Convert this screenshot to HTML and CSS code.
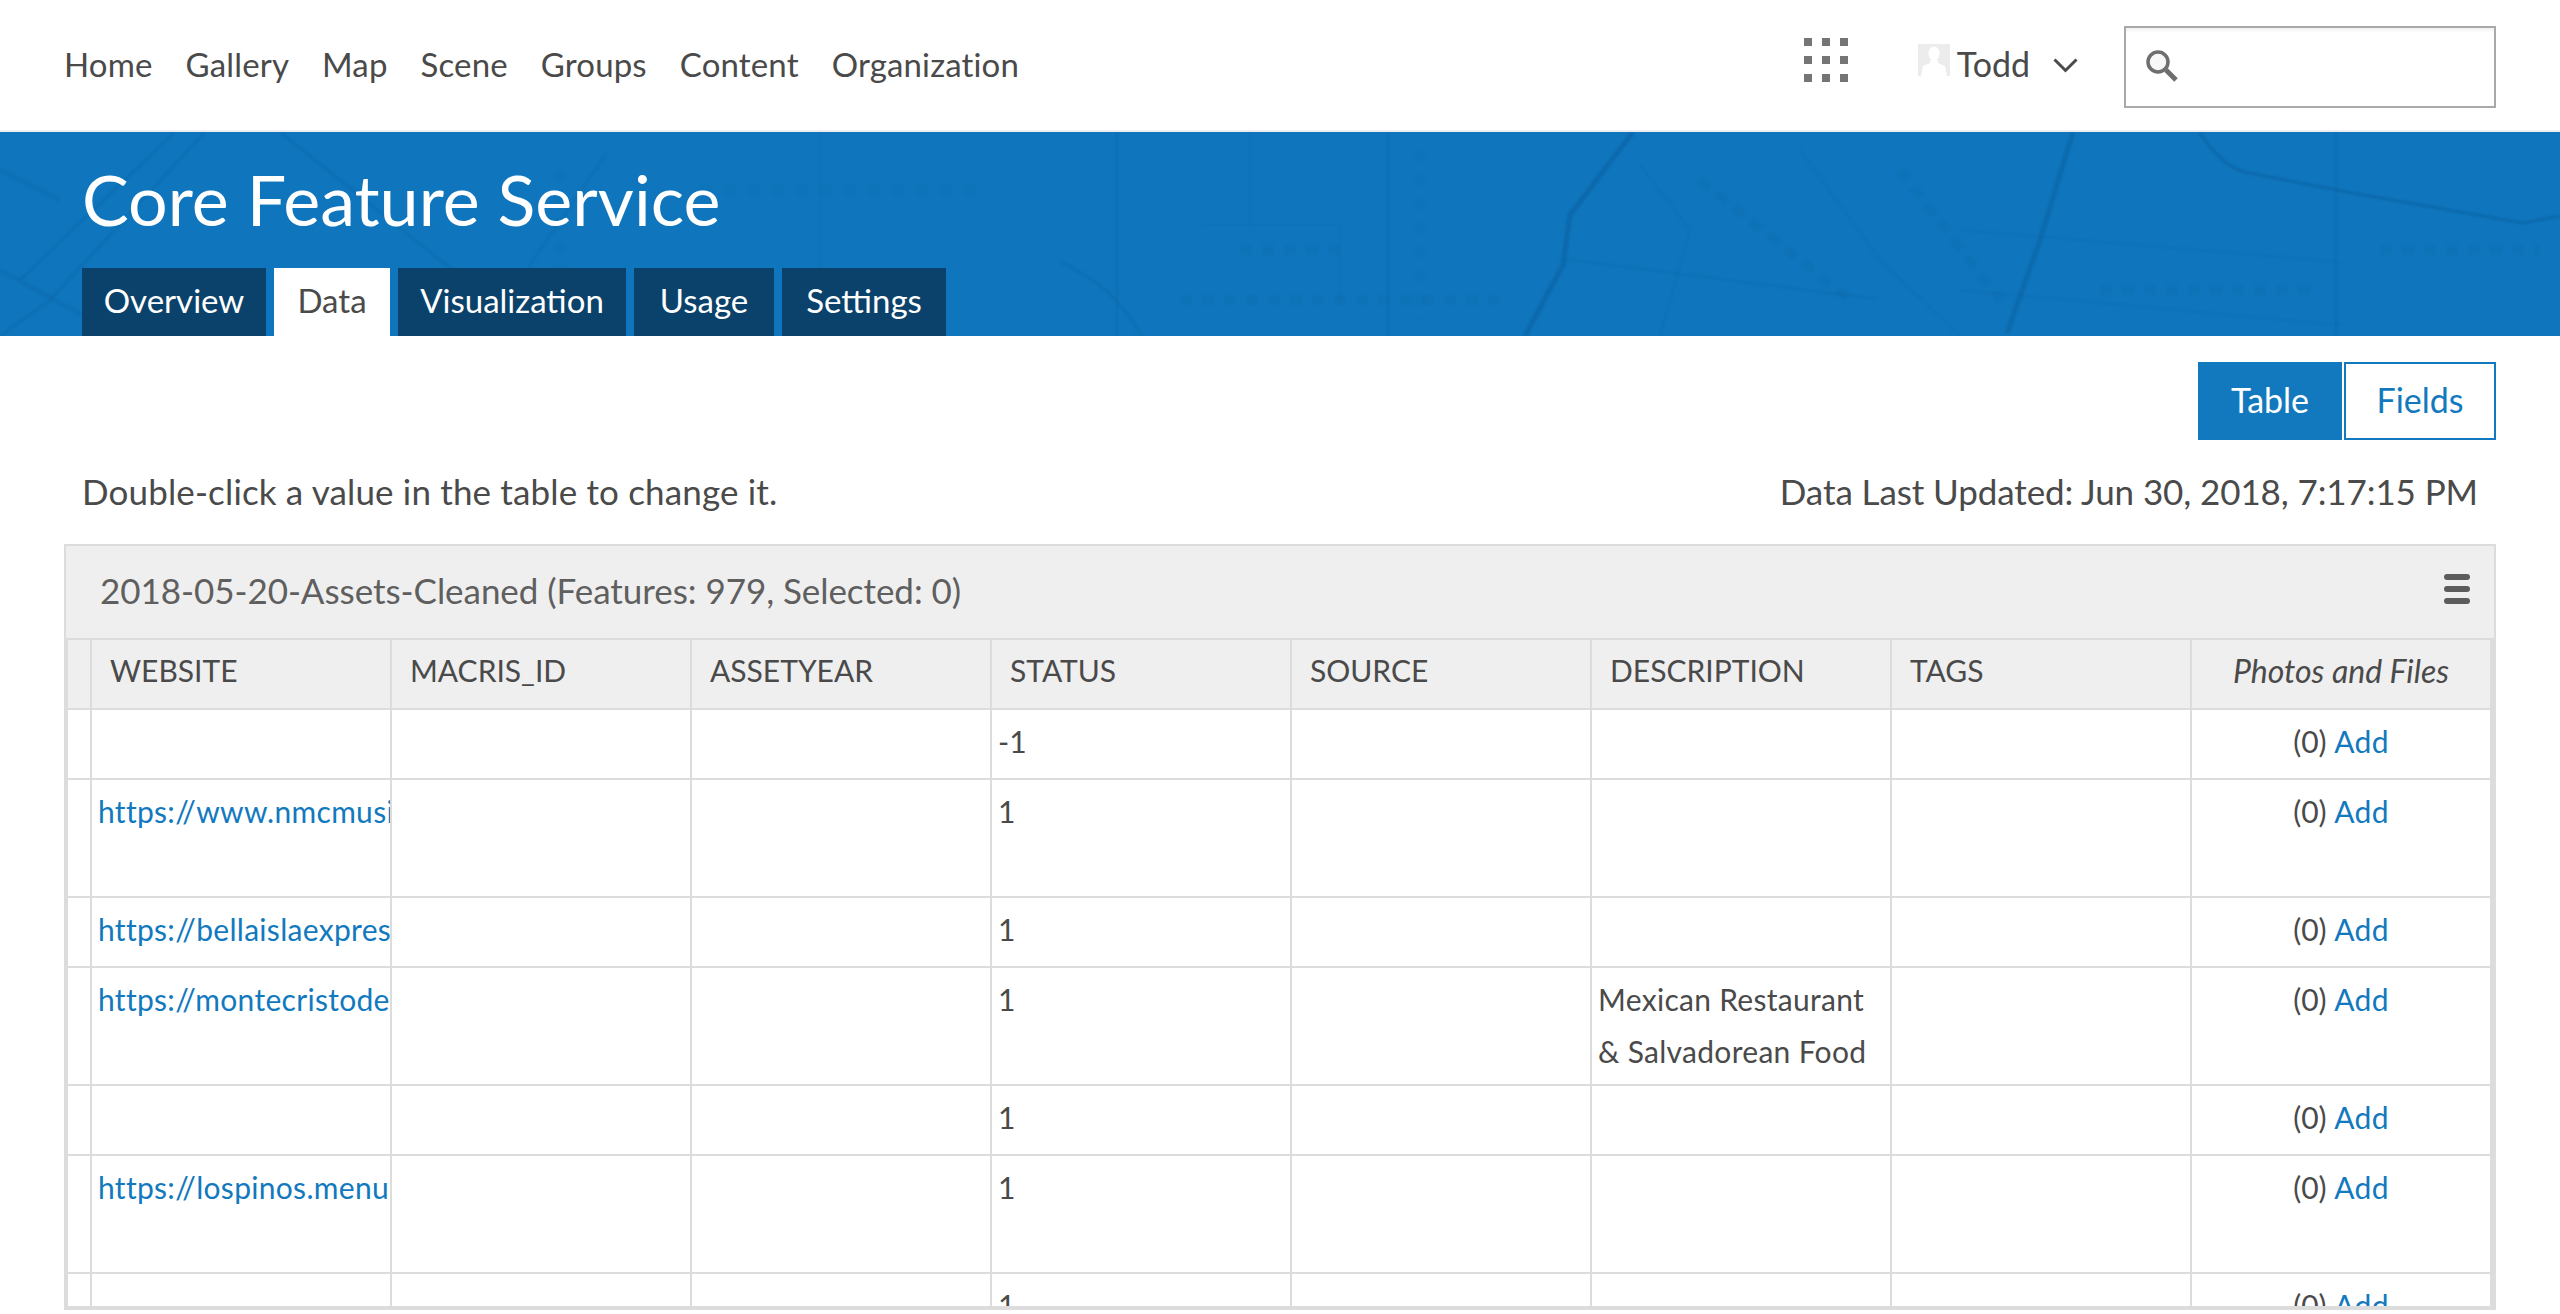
FILE: index.html
```html
<!DOCTYPE html>
<html lang="en">
<head>
  <meta charset="UTF-8" />
  <title>Core Feature Service</title>
  <link rel="stylesheet" href="styles.css">
</head>
<body>
  <header class="topbar">
    <nav class="main-nav">
      <a href="#">Home</a>
      <a href="#">Gallery</a>
      <a href="#">Map</a>
      <a href="#">Scene</a>
      <a href="#">Groups</a>
      <a href="#">Content</a>
      <a href="#">Organization</a>
    </nav>
    <div class="user-tools">
      <svg class="apps-icon" width="44" height="44" viewBox="0 0 44 44" fill="#757575">
        <rect x="0" y="0" width="8" height="8"/><rect x="18" y="0" width="8" height="8"/><rect x="36" y="0" width="8" height="8"/>
        <rect x="0" y="18" width="8" height="8"/><rect x="18" y="18" width="8" height="8"/><rect x="36" y="18" width="8" height="8"/>
        <rect x="0" y="36" width="8" height="8"/><rect x="18" y="36" width="8" height="8"/><rect x="36" y="36" width="8" height="8"/>
      </svg>
      <div class="user-menu">
        <svg class="avatar" width="32" height="32" viewBox="0 0 32 32">
          <rect width="32" height="32" fill="#ececec"/>
          <ellipse cx="16" cy="9.5" rx="5.5" ry="7" fill="#fff"/>
          <path d="M12 16h8v3l7 3 2 10H3l2-10 7-3z" fill="#fff"/>
        </svg>
        <span class="user-name">Todd</span>
        <svg class="chevron" width="25" height="15" viewBox="0 0 25 15" fill="none" stroke="#4a4a4a" stroke-width="3">
          <path d="M1.5 1.5l11 11 11-11"/>
        </svg>
      </div>
      <div class="search-box">
        <svg width="32" height="32" viewBox="0 0 32 32" fill="none" stroke="#6e6e6e">
          <circle cx="12" cy="12" r="10" stroke-width="3.5" fill="#f7f7f7"/>
          <path d="M20 20l10 10" stroke-width="5"/>
        </svg>
      </div>
    </div>
  </header>

  <section class="banner">
    <svg class="banner-map" width="2560" height="204" viewBox="0 132 2560 204" fill="none" stroke="#0a5f9e">
      <path d="M205 132L50 300L0 336M175 132L20 280" stroke-width="3" opacity=".3"/>
      <path d="M280 132L490 300L520 336" stroke-width="3" opacity=".28"/>
      <path d="M607 153L533 260L500 336" stroke-width="3" opacity=".25"/>
      <path d="M0 270L120 336M0 170L60 200" stroke-width="4" opacity=".28"/>
      <path d="M1117 132V336M1388 132V336M2336 132V336" stroke-width="2" opacity=".35"/>
      <path d="M1633 132L1570 215L1563 265L1525 336" stroke-width="5" opacity=".55"/>
      <path d="M1060 262C1100 280 1120 300 1142 336" stroke-width="3" opacity=".3"/>
      <path d="M1563 259L1876 299" stroke-width="2" opacity=".3"/>
      <path d="M1640 165L1690 230L1660 336M1800 150L1880 260L1960 336" stroke-width="2" opacity=".22"/>
      <path d="M2073 132L2040 240L2007 333" stroke-width="5" opacity=".5"/>
      <path d="M2199 132C2215 155 2230 170 2249 173L2347 192L2523 223L2560 216" stroke-width="3" opacity=".55"/>
      <path d="M1960 290L2340 325M1960 230L2340 262" stroke-width="2" opacity=".22"/>
      <path d="M1200 225H1340V300M820 132V336M1250 132V225" stroke-width="2" opacity=".2"/>
      <path d="M1240 250H1350M1180 300H1500M1700 180L1850 300M1900 170L2000 300M2100 290H2320M2380 250H2540" stroke-width="9" stroke-dasharray="12 10" opacity=".16"/>
      <path d="M560 170V330M700 190H980M1420 150V320" stroke-width="9" stroke-dasharray="12 12" opacity=".09"/>
    </svg>
    <h1>Core Feature Service</h1>
    <div class="tabs">
      <a href="#" class="tab">Overview</a>
      <a href="#" class="tab active">Data</a>
      <a href="#" class="tab">Visualization</a>
      <a href="#" class="tab">Usage</a>
      <a href="#" class="tab">Settings</a>
    </div>
  </section>

  <div class="view-toggle">
    <a href="#" class="toggle-btn on">Table</a>
    <a href="#" class="toggle-btn">Fields</a>
  </div>

  <div class="info-row">
    <span class="hint">Double-click a value in the table to change it.</span>
    <span class="updated">Data Last Updated: Jun 30, 2018, 7:17:15 PM</span>
  </div>

  <div class="panel">
    <div class="panel-title">
      <span>2018-05-20-Assets-Cleaned (Features: 979, Selected: 0)</span>
      <svg width="26" height="30" viewBox="0 0 26 30" fill="#5c5c5c">
        <rect y="0" width="26" height="6" rx="3"/><rect y="12" width="26" height="6" rx="3"/><rect y="24" width="26" height="6" rx="3"/>
      </svg>
    </div>
    <div class="table-wrap">
      <table class="data-table">
        <colgroup>
          <col class="col-select"><col><col><col><col><col><col><col><col class="col-photos">
        </colgroup>
        <thead>
          <tr>
            <th></th><th>WEBSITE</th><th>MACRIS_ID</th><th>ASSETYEAR</th><th>STATUS</th><th>SOURCE</th><th>DESCRIPTION</th><th>TAGS</th>
            <th class="photos-head">Photos and Files</th>
          </tr>
        </thead>
        <tbody>
          <tr>
            <td></td><td></td><td></td><td></td><td>-1</td><td></td><td></td><td></td>
            <td class="photos">(0) <a href="#">Add</a></td>
          </tr>
          <tr class="tall">
            <td></td><td><a href="#">https://www.nmcmusic.com</a></td><td></td><td></td><td>1</td><td></td><td></td><td></td>
            <td class="photos">(0) <a href="#">Add</a></td>
          </tr>
          <tr>
            <td></td><td><a href="#">https://bellaislaexpress.com</a></td><td></td><td></td><td>1</td><td></td><td></td><td></td>
            <td class="photos">(0) <a href="#">Add</a></td>
          </tr>
          <tr class="tall">
            <td></td><td><a href="#">https://montecristodelicias.com</a></td><td></td><td></td><td>1</td><td></td>
            <td class="wrap">Mexican Restaurant &amp; Salvadorean Food</td><td></td>
            <td class="photos">(0) <a href="#">Add</a></td>
          </tr>
          <tr>
            <td></td><td></td><td></td><td></td><td>1</td><td></td><td></td><td></td>
            <td class="photos">(0) <a href="#">Add</a></td>
          </tr>
          <tr class="tall">
            <td></td><td><a href="#">https://lospinos.menu</a></td><td></td><td></td><td>1</td><td></td><td></td><td></td>
            <td class="photos">(0) <a href="#">Add</a></td>
          </tr>
          <tr>
            <td></td><td></td><td></td><td></td><td>1</td><td></td><td></td><td></td>
            <td class="photos">(0) <a href="#">Add</a></td>
          </tr>
        </tbody>
      </table>
    </div>
  </div>
</body>
</html>
```
FILE: styles.css
```css
:root {
  --blue: #1279be;
  --text: #4a4a4a;
  --line: #dcdcdc;
  --head-bg: #efefef;
}
* {
  box-sizing: border-box;
}
body {
  margin: 0;
  background: #fff;
  color: var(--text);
  font-family: 'Lato', 'Open Sans', sans-serif;
  font-size: 32px;
}
a {
  text-decoration: none;
  color: inherit;
}
.topbar {
  height: 132px;
  border-bottom: 2px solid #eeeef2;
  padding: 0 64px;
  display: flex;
  align-items: center;
  justify-content: space-between;
}
.main-nav {
  display: flex;
  gap: 33px;
  font-size: 33px;
  letter-spacing: 0.15px;
  padding-bottom: 3px;
}
.user-tools {
  display: flex;
  align-items: center;
}
.apps-icon {
  margin: 0 70px 10px 0;
}
.user-menu {
  display: flex;
  align-items: center;
  margin-right: 46px;
}
.avatar {
  margin-bottom: 10px;
}
.user-name {
  margin: 0 23px 3px 7px;
  font-size: 34px;
}
.search-box {
  width: 372px;
  height: 82px;
  margin-top: 4px;
  border: 2px solid #a9a9a9;
  box-shadow: inset 0 4px 4px -2px rgba(0, 0, 0, 0.07);
  padding: 22px 20px;
}
.search-box svg {
  display: block;
}
.banner {
  position: relative;
  height: 204px;
  background: #0f76bd;
  color: #fff;
  padding: 0 82px;
  display: flex;
  flex-direction: column;
  overflow: hidden;
}
.banner-map {
  position: absolute;
  left: 0;
  top: 0;
  filter: blur(1px);
}
.banner h1 {
  position: relative;
  margin: 0;
  height: 136px;
  font-size: 70px;
  font-weight: 400;
  line-height: 134px;
}
.tabs {
  position: relative;
  display: grid;
  grid-template-columns: 184px 116px 228px 140px 164px;
  gap: 8px;
}
.tab {
  height: 68px;
  line-height: 64px;
  text-align: center;
  background: #0b426b;
  font-size: 33px;
}
.tab.active {
  background: #fff;
  color: var(--text);
}
.view-toggle {
  display: flex;
  justify-content: flex-end;
  gap: 2px;
  padding: 26px 64px 0 0;
}
.toggle-btn {
  width: 152px;
  height: 78px;
  line-height: 72px;
  text-align: center;
  border: 2px solid var(--blue);
  color: var(--blue);
  font-size: 34px;
}
.toggle-btn.on {
  width: 144px;
  background: var(--blue);
  color: #fff;
}
.info-row {
  display: flex;
  justify-content: space-between;
  padding: 0 82px;
  height: 104px;
  line-height: 103px;
  font-size: 35px;
}
.hint {
  letter-spacing: 0.15px;
}
.updated {
  letter-spacing: -0.1px;
}
.panel {
  margin: 0 64px;
  height: 766px;
  border: 2px solid var(--line);
  display: flex;
  flex-direction: column;
  overflow: hidden;
}
.panel-title {
  flex: none;
  height: 92px;
  background: var(--head-bg);
  color: #5f5f5f;
  padding: 0 24px 4px 34px;
  display: flex;
  align-items: center;
  justify-content: space-between;
  font-size: 35px;
  letter-spacing: -0.05px;
}
.panel-title svg {
  margin-top: -2px;
}
.table-wrap {
  flex: 1;
  min-height: 0;
  overflow: hidden;
  border-top: 2px solid var(--line);
  border-left: 2px solid var(--line);
  border-right: 4px solid var(--line);
  border-bottom: 2px solid var(--line);
}
.data-table {
  table-layout: fixed;
  border-collapse: separate;
  border-spacing: 0;
  width: 2422px;
  font-size: 30px;
}
.data-table col {
  width: 300px;
}
.data-table col.col-select {
  width: 24px;
}
.data-table col.col-photos {
  width: 298px;
}
.data-table th,
.data-table td {
  border-right: 2px solid var(--line);
  border-bottom: 2px solid var(--line);
  overflow: hidden;
  white-space: nowrap;
}
.data-table th:last-child,
.data-table td:last-child {
  border-right: none;
}
.data-table th {
  height: 70px;
  padding: 0 18px 8px;
  background: var(--head-bg);
  font-weight: 400;
  text-align: left;
}
.data-table th.photos-head {
  font-style: italic;
  font-size: 32px;
  text-align: center;
  padding: 0 0 8px;
}
.data-table td {
  height: 70px;
  padding: 5px 6px;
  line-height: 52px;
  vertical-align: top;
}
.data-table tr.tall td {
  height: 118px;
}
.data-table td.wrap {
  white-space: normal;
  letter-spacing: 0.3px;
}
.data-table td a {
  color: var(--blue);
  letter-spacing: 0.3px;
}
.data-table td.photos {
  text-align: center;
}
```
